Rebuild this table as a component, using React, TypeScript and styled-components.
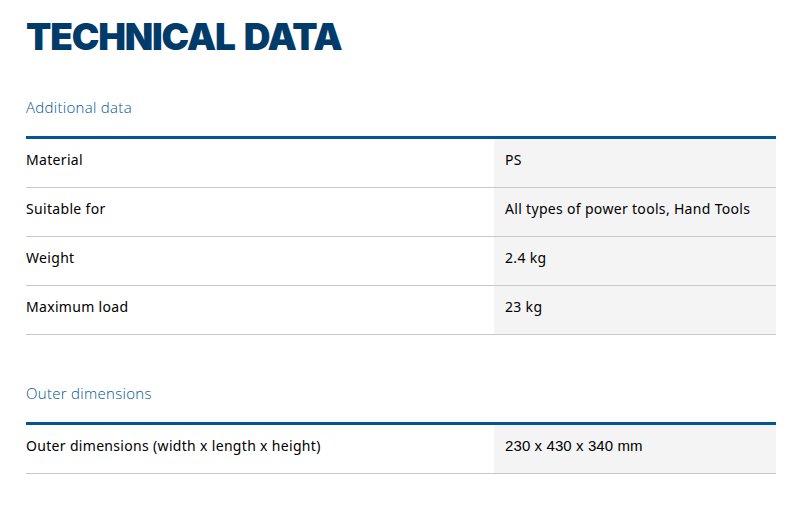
import React from "react";
import styled, { createGlobalStyle } from "styled-components";

const GlobalStyle = createGlobalStyle`
  body {
    margin: 0;
    background: #fff;
    font-family: "Noto Sans", "Open Sans", sans-serif;
    color: #000;
  }
`;

interface Row {
  label: string;
  value: string;
  arial?: boolean;
}

interface Section {
  title: string;
  rows: Array<Row>;
}

const sections: Array<Section> = [
  {
    title: "Additional data",
    rows: [
      { label: "Material", value: "PS" },
      { label: "Suitable for", value: "All types of power tools, Hand Tools" },
      { label: "Weight", value: "2.4 kg" },
      { label: "Maximum load", value: "23 kg" }
    ]
  },
  {
    title: "Outer dimensions",
    rows: [
      {
        label: "Outer dimensions (width x length x height)",
        value: "230 x 430 x 340 mm",
        arial: true
      }
    ]
  }
];

const Page = styled.div`
  width: 750px;
  padding: 17px 0 0 26px;
`;

const Heading = styled.h2`
  margin: 0;
  font-family: Inter, sans-serif;
  font-weight: 900;
  font-size: 37px;
  line-height: 40px;
  letter-spacing: -1.2px;
  word-spacing: 3px;
  color: #003b6a;
`;

const SectionBlock = styled.section<{ first: boolean }>`
  margin-top: ${props => (props.first ? "40px" : "48px")};
`;

const SectionTitle = styled.h3`
  margin: 0 0 19px;
  font-family: "Open Sans", sans-serif;
  font-weight: 300;
  font-size: 15px;
  line-height: 20px;
  letter-spacing: 0.3px;
  color: #005691;
`;

const Table = styled.div`
  border-top: 3px solid #005691;
`;

const TableRow = styled.div`
  display: grid;
  grid-template-columns: 468px 282px;
  height: 48px;
  border-bottom: 1px solid #c8c8c8;
  font-size: 14px;
  letter-spacing: 0.32px;
`;

const Label = styled.div`
  display: flex;
  align-items: center;
  padding-bottom: 8px;
`;

const Value = styled.div<{ arial?: boolean }>`
  display: flex;
  align-items: center;
  padding: 0 0 8px 11px;
  background: #f4f4f4;
  font-family: ${props =>
    props.arial ? '"Liberation Sans", Arial, sans-serif' : "inherit"};
  font-size: ${props => (props.arial ? "15px" : "14px")};
  letter-spacing: ${props => (props.arial ? "0.1px" : "0.32px")};
`;

function App() {
  return (
    <>
      <GlobalStyle />
      <Page>
        <Heading>TECHNICAL DATA</Heading>
        {sections.map((section, key) => (
          <SectionBlock key={key} first={key === 0}>
            <SectionTitle>{section.title}</SectionTitle>
            <Table>
              {section.rows.map((row, i) => (
                <TableRow key={i}>
                  <Label>{row.label}</Label>
                  <Value arial={row.arial}>{row.value}</Value>
                </TableRow>
              ))}
            </Table>
          </SectionBlock>
        ))}
      </Page>
    </>
  );
}

export default App;
